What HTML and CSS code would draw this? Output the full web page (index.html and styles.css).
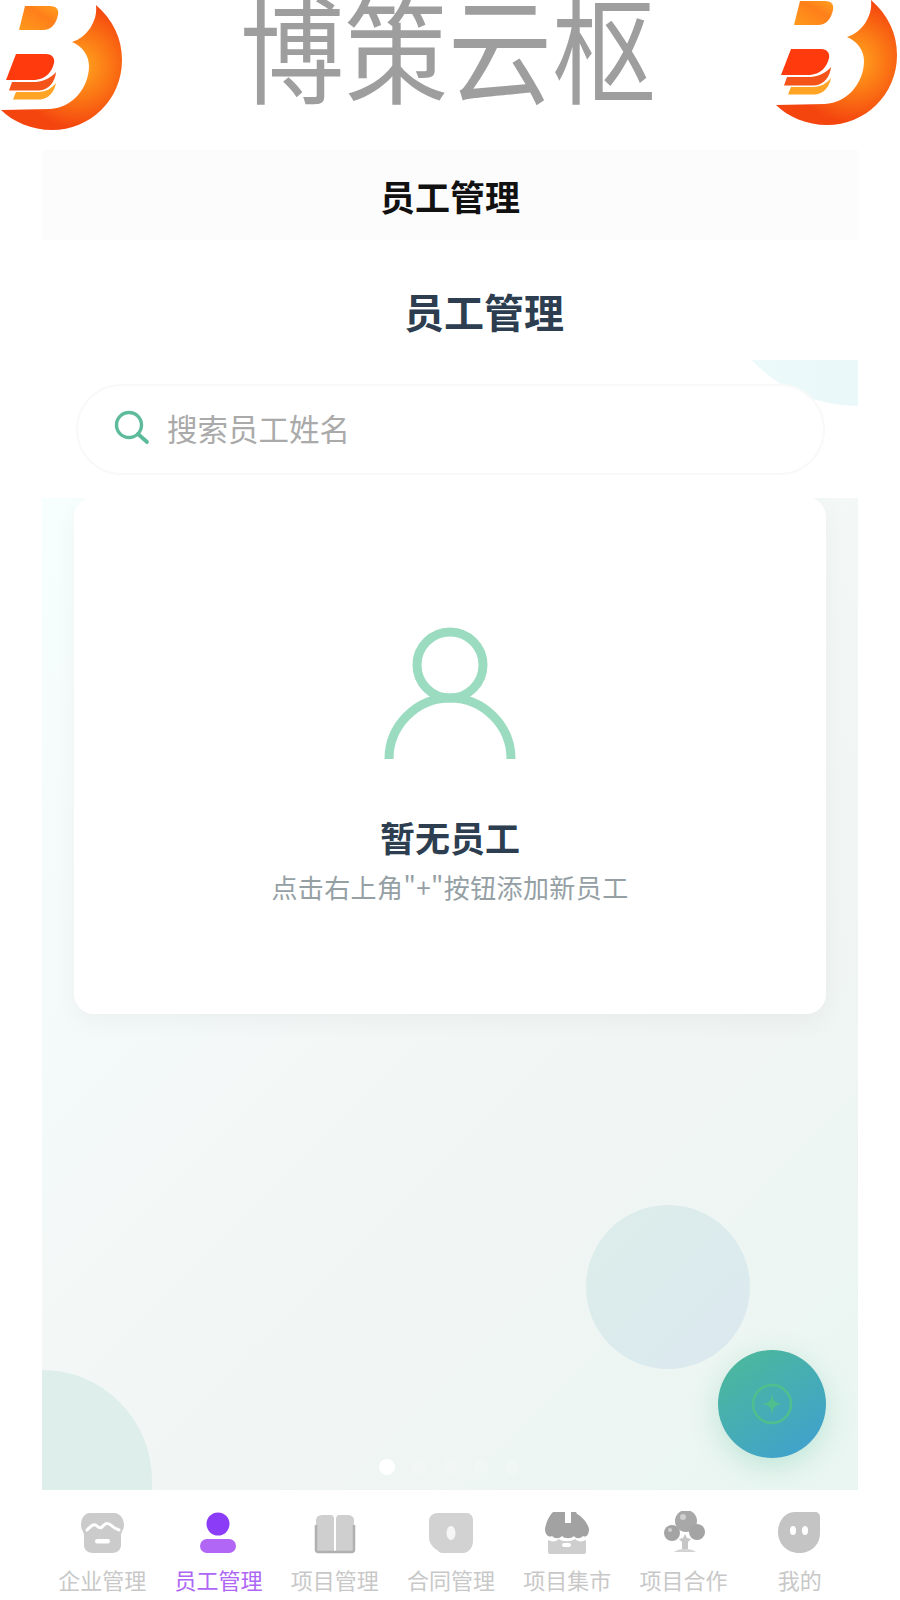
FILE: index.html
```html
<!DOCTYPE html>
<html lang="zh-CN">
<head>
    <meta charset="UTF-8">
    <meta name="viewport" content="width=device-width, initial-scale=1.0">
    <title>员工管理</title>
    <link rel="stylesheet" href="styles.css">
</head>
<body>
    <svg class="defs" width="0" height="0">
        <defs>
            <radialGradient id="logoRing" gradientUnits="userSpaceOnUse" cx="78" cy="66" r="62">
                <stop offset="0.1" stop-color="#ffa01e"/>
                <stop offset="0.55" stop-color="#fb7414"/>
                <stop offset="1" stop-color="#f4450f"/>
            </radialGradient>
            <linearGradient id="logoTop" x1="0" y1="1" x2="1" y2="0">
                <stop offset="0" stop-color="#ff9a1c"/>
                <stop offset="0.6" stop-color="#ff7f1a"/>
                <stop offset="1" stop-color="#ffa01e"/>
            </linearGradient>
            <symbol id="logo" viewBox="0 0 125 135">
                <path fill="url(#logoRing)" d="M96 5C113 20 122 38 122 60C122 100 90 130 52 130C32 130 13 122 1 110L50 109C72 108 89 88 89 66C89 55 82 46 72 42C86 38 98 22 96 5Z"/>
                <path fill="url(#logoTop)" d="M25 6L50 6C57 6 59 10 58 15C56 24 51 30 43 30L19 30Z"/>
                <path fill="#ff3a0d" d="M16 54L46 54C52 54 55 58 54 63C52 72 46 79 35 80L6 80Z"/>
                <path fill="#f4541a" d="M12 82L36 82C45 81 52 77 56 72C55 82 49 90 39 90.500L9 90.500Z"/>
                <path fill="#ffa424" d="M16 92L38 92C46 92 52 88 56 83C54 93 48 99 40 99.500L13 99.500Z"/>
            </symbol>
        </defs>
    </svg>

    <header class="banner">
        <svg class="logo"><use href="#logo"/></svg>
        <div class="brand">博策云枢</div>
        <svg class="logo logo-right"><use href="#logo"/></svg>
    </header>

    <div class="app">
        <div class="navbar">员工管理</div>

        <h1 class="page-title">员工管理</h1>

        <div class="search-area">
            <div class="corner"></div>
            <div class="search">
                <svg class="search-icon" viewBox="0 0 36 36">
                    <circle cx="15" cy="15" r="12.500" fill="none" stroke="#5dbb9b" stroke-width="3.400"/>
                    <path d="M24 24L33 32" stroke="#5dbb9b" stroke-width="3.800" stroke-linecap="round"/>
                </svg>
                <span class="search-text">搜索员工姓名</span>
            </div>
        </div>

        <main class="content">
            <div class="bubble bubble-big"></div>
            <div class="bubble bubble-left"></div>

            <section class="card">
                <svg class="empty-icon" viewBox="0 0 132 132">
                    <circle cx="66" cy="37" r="33" fill="none" stroke="#9bdcc0" stroke-width="9"/>
                    <path d="M5 131C5 98 32 70 66 70C100 70 127 98 127 131" fill="none" stroke="#9bdcc0" stroke-width="9"/>
                </svg>
                <div class="empty-title">暂无员工</div>
                <div class="empty-sub">点击右上角"+"按钮添加新员工</div>
            </section>

            <div class="dots">
                <span class="dot dot-on"></span>
                <span class="dot"></span>
                <span class="dot"></span>
                <span class="dot"></span>
                <span class="dot"></span>
            </div>

            <div class="fab">
                <svg viewBox="0 0 44 44" width="44" height="44">
                    <circle cx="22" cy="22" r="19" fill="none" stroke="#4fc08d" stroke-width="2.500"/>
                    <path d="M22 11C22.800 19 25 21.200 33 22C25 22.800 22.800 25 22 33C21.200 25 19 22.800 11 22C19 21.200 21.200 19 22 11Z" fill="#4fc08d"/>
                </svg>
            </div>
        </main>

        <nav class="tabbar">
            <div class="tab">
                <svg class="tab-icon" viewBox="0 0 44 44">
                    <path fill="#cbcbcb" d="M10 2L34 2C40 2 44 8 44 14C44 19 41 21 41 24L41 34C41 39 37 42 32 42L13 42C8 42 4 39 4 34L4 24C4 21 1 19 1 14C1 8 4 2 10 2Z"/>
                    <path fill="none" stroke="#fff" stroke-width="3" stroke-linecap="round" d="M7 19C11 15 14 12 17 15C19 17 21 18 24 14C27 11 30 13 32 15C34 17 36 18 39 19"/>
                    <rect x="15" y="28" width="15" height="4.500" rx="2.200" fill="#fff"/>
                </svg>
                <span class="tab-label">企业管理</span>
            </div>
            <div class="tab tab-on">
                <svg class="tab-icon" viewBox="0 0 44 44">
                    <circle cx="22" cy="13" r="11.500" fill="#8b3cf7"/>
                    <rect x="4" y="28" width="36" height="14" rx="7" fill="#b266f5"/>
                </svg>
                <span class="tab-label">员工管理</span>
            </div>
            <div class="tab">
                <svg class="tab-icon" viewBox="0 0 44 44">
                    <path fill="#cfcfcf" d="M3 9C3 5 7 4 10 4L18 4C20 4 21 6 21 8L21 40L3 40Z"/>
                    <path fill="#cfcfcf" d="M41 9C41 5 37 4 34 4L26 4C24 4 23 6 23 8L23 40L41 40Z"/>
                    <path fill="none" stroke="#b0b0b0" stroke-width="2.500" d="M3 14L3 39C3 40 4 41 5 41L39 41C40 41 41 40 41 39L41 14"/>
                </svg>
                <span class="tab-label">项目管理</span>
            </div>
            <div class="tab">
                <svg class="tab-icon" viewBox="0 0 44 44">
                    <path fill="#d2d2d2" d="M9 2L38 2C41 2 44 5 44 9L44 30C44 36 40 42 34 42L13 42C11 42 10 41 8 39C3 36 0 31 0 26L0 10C0 5 4 2 9 2Z"/>
                    <ellipse cx="22" cy="22" rx="4.500" ry="7" fill="#f6f6f6"/>
                </svg>
                <span class="tab-label">合同管理</span>
            </div>
            <div class="tab">
                <svg class="tab-icon" viewBox="0 0 44 44">
                    <path fill="#a2a2a2" d="M8 1L20 1L20 12L26 12L26 1L31 1L32 3C38 6 43 13 44 18C44 24 41 27 38 25C35 28 31 28 29 25C26 28 20 28 17 25C14 28 10 28 7 25C4 27 0 24 0 18C1 11 4 5 8 1Z"/>
                    <path fill="#cecece" d="M3 29C7 31 11 31 14 28C17 31 26 31 30 28C33 31 37 31 41 29L41 41C41 42 40 43 39 43L5 43C4 43 3 42 3 41Z"/>
                    <rect x="17" y="32" width="9" height="4" rx="2" fill="#fff"/>
                </svg>
                <span class="tab-label">项目集市</span>
            </div>
            <div class="tab">
                <svg class="tab-icon" viewBox="0 0 44 44">
                    <circle cx="24" cy="10" r="11" fill="#a8a8a8"/>
                    <circle cx="10" cy="22" r="8" fill="#a4a4a4"/>
                    <circle cx="35" cy="21" r="8" fill="#a4a4a4"/>
                    <circle cx="21" cy="6" r="3" fill="#cfcfcf"/>
                    <circle cx="8" cy="19" r="2" fill="#cfcfcf"/>
                    <path fill="#c6c6c6" d="M23 23L25 27L29 28L26 31L26 38L20 38L20 31L17 28L21 27Z"/>
                    <path fill="#d2d2d2" d="M12 41C17 37 29 37 34 41Z"/>
                </svg>
                <span class="tab-label">项目合作</span>
            </div>
            <div class="tab">
                <svg class="tab-icon" viewBox="0 0 44 44">
                    <path fill="#c4c4c4" d="M17 1L37 1C40 1 42 3 42 6L42 22C42 34 33 42 21 42C9 42 0 33 0 21C0 10 7 1 17 1Z"/>
                    <ellipse cx="15" cy="19.500" rx="3" ry="4.500" fill="#fff"/>
                    <ellipse cx="27" cy="19.500" rx="3" ry="4.500" fill="#fff"/>
                </svg>
                <span class="tab-label">我的</span>
            </div>
        </nav>
    </div>
</body>
</html>
```

FILE: styles.css
```css
html, body {
    margin: 0;
    padding: 0;
    height: 1600px;
    overflow: hidden;
}
body {
    background: #fff;
    font-family: "Noto Sans CJK SC", "Noto Sans", sans-serif;
}
.defs {
    display: block;
}

/* top banner */
.banner {
    display: flex;
    justify-content: space-between;
    height: 150px;
    overflow: hidden;
}
.logo {
    display: block;
    width: 125px;
    height: 135px;
    flex: none;
}
.logo-right {
    margin-top: -5px;
}
/* the wordmark is stretched a bit taller than the font */
.brand {
    margin: -22px 0 0 -4px;
    font-size: 104px;
    line-height: 150px;
    color: #9e9e9e;
    white-space: nowrap;
    transform: scaleY(1.12);
    transform-origin: center 86%;
}

.app {
    margin: 0 42px;
    height: 1450px;
    display: flex;
    flex-direction: column;
}
.navbar {
    height: 90px;
    flex: none;
    display: flex;
    align-items: center;
    justify-content: center;
    background: #fcfcfc;
    font-size: 35px;
    font-weight: 700;
    color: #111;
}
.page-title {
    height: 120px;
    flex: none;
    margin: 0;
    padding: 22px 0 0 68px;
    box-sizing: border-box;
    display: flex;
    align-items: center;
    justify-content: center;
    font-size: 40px;
    font-weight: 700;
    color: #2c3e50;
}

/* search */
.search-area {
    position: relative;
    height: 138px;
    flex: none;
    box-sizing: border-box;
    padding: 24px 33px 0 34px;
    overflow: hidden;
}
.corner {
    position: absolute;
    right: -146px;
    top: -246px;
    width: 292px;
    height: 292px;
    border-radius: 50%;
    background: linear-gradient(90deg, #eefafa, #e6f6f9);
}
.search {
    position: relative;
    height: 91px;
    box-sizing: border-box;
    display: flex;
    align-items: center;
    gap: 17px;
    padding: 0 0 3px 36px;
    background: #fff;
    border: 2px solid #f9f9f9;
    border-radius: 46px;
}
.search-icon {
    width: 36px;
    height: 36px;
    flex: none;
}
.search-text {
    font-size: 30.500px;
    color: #aaa;
}

/* main area */
.content {
    position: relative;
    flex: 1;
    padding: 0 32px;
    overflow: hidden;
    background: linear-gradient(135deg, #f7fefe 0%, #f1f5f4 65%, #e9f6f1 100%);
}
.bubble {
    position: absolute;
    border-radius: 50%;
}
.bubble-big {
    right: 108px;
    bottom: 121px;
    width: 164px;
    height: 164px;
    background: linear-gradient(135deg, #dcedea, #dbe9ef);
}
.bubble-left {
    left: -110px;
    bottom: -100px;
    width: 220px;
    height: 220px;
    background: #deeeeb;
}
.card {
    position: relative;
    height: 517px;
    margin-top: -1px;
    box-sizing: border-box;
    padding-top: 131px;
    display: flex;
    flex-direction: column;
    align-items: center;
    background: #fff;
    border-radius: 20px;
    box-shadow: 0 8px 24px rgba(0, 0, 0, 0.04);
}
.empty-icon {
    width: 132px;
    height: 132px;
    margin-bottom: 55px;
    overflow: visible;
}
.empty-title {
    font-size: 35px;
    font-weight: 700;
    line-height: 44px;
    color: #2c3e50;
}
.empty-sub {
    margin-top: 10px;
    font-size: 26px;
    line-height: 36px;
    letter-spacing: 0.400px;
    color: #95a0a5;
}
.dots {
    position: absolute;
    left: 337px;
    bottom: 15px;
    display: flex;
    align-items: center;
    gap: 17px;
}
.dot {
    width: 14px;
    height: 14px;
    border-radius: 50%;
    background: rgba(255, 255, 255, 0.2);
}
.dot-on {
    width: 16px;
    height: 16px;
    background: #fff;
}
.fab {
    position: absolute;
    right: 32px;
    bottom: 32px;
    width: 108px;
    height: 108px;
    display: flex;
    align-items: center;
    justify-content: center;
    border-radius: 50%;
    background: linear-gradient(145deg, #4dba97, #3f9fd2);
    box-shadow: 0 8px 28px rgba(80, 190, 150, 0.28);
}

/* bottom tabs */
.tabbar {
    height: 110px;
    flex: none;
    box-sizing: border-box;
    padding-left: 2px;
    display: grid;
    grid-template-columns: repeat(7, 1fr);
    background: #fff;
}
.tab {
    display: flex;
    flex-direction: column;
    align-items: center;
    padding-top: 21px;
}
.tab-icon {
    width: 44px;
    height: 44px;
    flex: none;
}
.tab-label {
    margin-top: 10px;
    font-size: 22px;
    line-height: 28px;
    color: #c8c8c8;
    white-space: nowrap;
}
.tab-on .tab-label {
    color: #ad66f5;
}
```
